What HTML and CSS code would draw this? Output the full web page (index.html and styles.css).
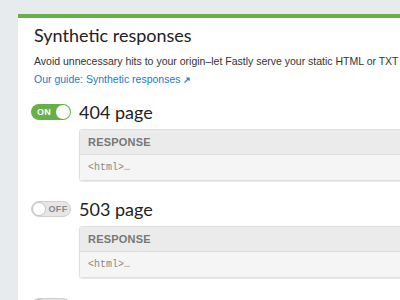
FILE: index.html
```html
<!DOCTYPE html>
<html>
<head>
<meta charset="utf-8">
<title>Synthetic responses</title>
<link rel="stylesheet" href="styles.css">
</head>
<body>
    <div id="main">
        <div class="card">
            <h1>Synthetic responses</h1>
            <p class="desc">Avoid unnecessary hits to your origin&ndash;let Fastly serve your static HTML or TXT files directly from the edge.</p>
            <p class="guide"><a href="#">Our guide: Synthetic responses <span class="ext">&#8599;</span></a></p>

            <div class="item">
                <div class="head">
                    <span class="toggle on"><span class="lbl">ON</span><span class="knob"></span></span>
                    <h2>404 page</h2>
                </div>
                <div class="resp">
                    <div class="resp-hd">RESPONSE</div>
                    <div class="resp-bd">&lt;html&gt;&hellip;</div>
                </div>
            </div>

            <div class="item">
                <div class="head">
                    <span class="toggle off"><span class="knob"></span><span class="lbl">OFF</span></span>
                    <h2>503 page</h2>
                </div>
                <div class="resp">
                    <div class="resp-hd">RESPONSE</div>
                    <div class="resp-bd">&lt;html&gt;&hellip;</div>
                </div>
            </div>

            <div class="item">
                <div class="head">
                    <span class="toggle off"><span class="knob"></span></span>
                </div>
            </div>
        </div>
    </div>
</body>
</html>
```

FILE: styles.css
```css
html, body { margin:0; padding:0; overflow:hidden; }
body { background:#e8ebee; font:10.5px "Liberation Sans", Arial, sans-serif; color:#333; }
h1, h2, p { margin:0; padding:0; font-weight:normal; }
a { text-decoration:none; color:#1a7bc4; }

#main { padding:14px 0 0 18px; }
.card { width:520px; background:#fff; border-top:4px solid #66b04a; padding:6px 16px 20px; }
.card h1 { font:18px Lato, "Open Sans", sans-serif; line-height:22px; color:#222; }
.card .desc { margin-top:8px; line-height:14px; white-space:nowrap; }
.card .guide { margin-top:4px; line-height:14px; }
.card .guide .ext { font-size:9px; font-weight:bold; }

.item { margin-top:17px; }
.item + .item { margin-top:20px; }
.head { display:flex; align-items:center; gap:8px; margin-left:-3px; height:16px; }
.head h2 { font:18px Lato, "Open Sans", sans-serif; line-height:16px; color:#222; }

.toggle { display:flex; align-items:center; box-sizing:border-box; width:40px; height:16px; border-radius:8px; padding:1px; }
.toggle .knob { width:14px; height:14px; border-radius:50%; background:#fff; box-sizing:border-box; }
.toggle .lbl { flex:1; text-align:center; font-size:9px; font-weight:bold; letter-spacing:0.3px; }
.toggle.on { background:#66b04a; }
.toggle.on .lbl { color:#fff; }
.toggle.off { background:#e6e6e6; border:1px solid #cfcfcf; padding:0; }
.toggle.off .knob { border:1px solid #c4c4c4; }
.toggle.off .lbl { color:#888; }

.resp { margin:9px 0 0 45px; border:1px solid #dedede; border-radius:3px; box-shadow:0 1px 0 #eaeaea; overflow:hidden; }
.resp-hd { background:#ebebeb; height:24px; line-height:24px; padding-left:8px; border-bottom:1px solid #dedede; font-weight:bold; font-size:11px; letter-spacing:0.2px; color:#777; }
.resp-bd { background:#f5f5f5; height:25px; padding-left:8px; font:10px "Liberation Mono", monospace; line-height:25px; color:#888; }
```
